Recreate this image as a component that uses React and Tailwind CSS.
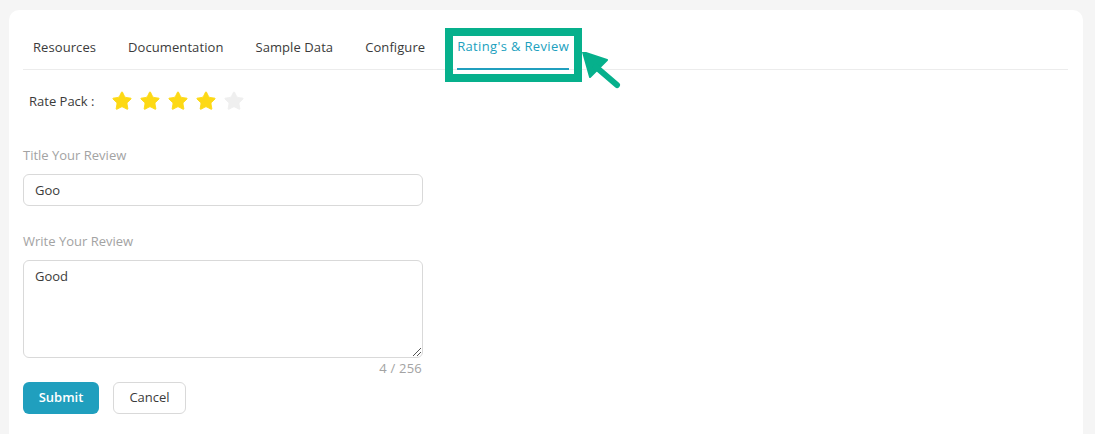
import { Star } from 'lucide-react';

const font = { fontFamily: '"Open Sans", sans-serif' };

function Tab({ label, active }) {
  return (
    <div className={active ? 'relative flex h-[43px] items-center border-b-2 border-[#209fbe] pb-[2px] text-[#209fbe] tracking-[0.35px]' : 'flex h-[41px] items-center text-[#3b3b3b] tracking-[0.08px]'}>
      {label}
    </div>
  );
}

function RatingStar({ on }) {
  return <Star size={22} strokeWidth={1} className={on ? 'fill-[#fdd915] text-[#fdd915]' : 'fill-[#efefef] text-[#efefef]'} />;
}

export default function App() {
  return (
    <div className="h-[434px] overflow-hidden bg-[#f5f5f5] pl-[9px] pr-[12px] pt-[10px] text-[13px]" style={font}>
      <div className="relative h-[440px] rounded-[10px] bg-white pl-[14px] pr-[15px] pt-[17px]">
        <div className="flex h-[43px] gap-[32px] border-b border-[#ececec] pl-[10px]">
          <Tab label="Resources" />
          <Tab label="Documentation" />
          <Tab label="Sample Data" />
          <Tab label="Configure" />
          <Tab label="Rating's & Review" active />
        </div>

        <div className="absolute left-[436px] top-[18px] h-[54px] w-[137px] border-[8px] border-[#06b08c]" />
        <svg className="absolute left-[572px] top-[42px]" width="42" height="42" viewBox="0 0 42 42">
          <path d="M2 0 L26 8 L9 25 Z" fill="#06b08c" stroke="#06b08c" strokeWidth="2" strokeLinejoin="round" />
          <path d="M15 15 L36 33" stroke="#06b08c" strokeWidth="6" strokeLinecap="round" />
        </svg>

        <div className="mt-[20px] flex items-center pl-[6px] text-[#3b3b3b]">
          <span className="w-[82px] pt-[1px]">Rate Pack :</span>
          <div className="flex gap-[6px]">
            <RatingStar on />
            <RatingStar on />
            <RatingStar on />
            <RatingStar on />
            <RatingStar />
          </div>
        </div>

        <div className="mt-[34px] w-[400px]">
          <div className="text-[#a3a3a3]">Title Your Review</div>
          <div className="mt-[8px] flex h-[32px] items-center rounded-[6px] border border-[#d9d9d9] px-[11px] pt-[2px] text-[#3b3b3b]">Goo</div>
          <div className="mt-[26px] text-[#a3a3a3]">Write Your Review</div>
          <div className="relative mt-[9px] h-[98px] rounded-[6px] border border-[#d9d9d9] px-[11px] pt-[6px] text-[#3b3b3b]">
            Good
            <svg className="absolute bottom-0 right-0" width="10" height="10" viewBox="0 0 10 10">
              <path d="M1 9 L9 1 M5 9 L9 5" stroke="#555" strokeWidth="1" />
            </svg>
          </div>
          <div className="mt-[1px] pr-[1px] text-right tracking-[0.2px] text-[#a3a3a3]">4 / 256</div>
          <div className="mt-[3px] flex gap-[14px]">
            <button className="h-[32px] w-[76px] rounded-[6px] bg-[#209fbe] font-semibold text-white">Submit</button>
            <button className="h-[32px] w-[73px] rounded-[6px] border border-[#d9d9d9] text-[#3b3b3b]">Cancel</button>
          </div>
        </div>
      </div>
    </div>
  );
}
